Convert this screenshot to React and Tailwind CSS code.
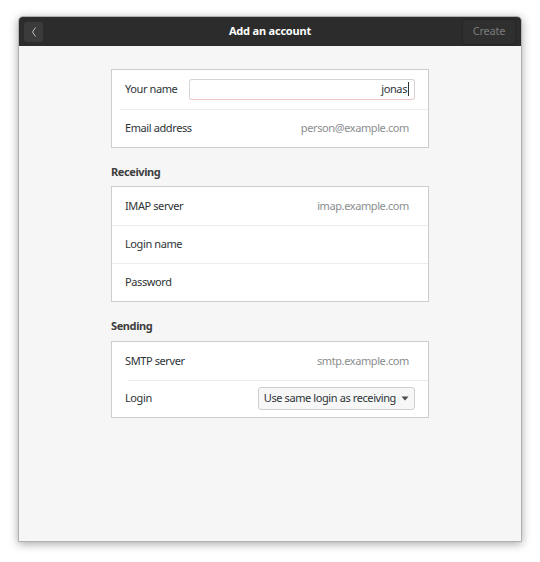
import React from 'react';

const font = { fontFamily: '"Noto Sans", "Open Sans", sans-serif' };

function Row({ label, children, sep = 'inset', h = 'h-[38.5px]' }) {
    return (
        <div className={`relative flex items-center justify-between ${h} pl-[13px] pr-[13px]`}>
            {sep === 'inset' && <div className="absolute top-0 left-[8px] right-0 h-px bg-[#ececec]" />}
            {sep === 'full' && <div className="absolute top-0 left-0 right-0 h-px bg-[#ececec]" />}
            {sep === 'deep' && <div className="absolute top-0 left-[16px] right-0 h-px bg-[#ececec]" />}
            <span className="text-[#2e3436]">{label}</span>
            {children}
        </div>
    );
}

function Hint({ children }) {
    return <span className="text-[#8b8e8f] pr-[6px]">{children}</span>;
}

export default function App() {
    return (
        <div className="w-[540px] h-[562px] bg-white pt-[16px] pl-[18px]" style={font}>
            <div className="w-[504px] h-[526px] bg-[#f6f6f6] border border-[#b0b0b0] rounded-t-[5px] shadow-[0_2px_10px_rgba(0,0,0,0.35)] flex flex-col overflow-hidden">
                {/* header bar */}
                <div className="h-[29px] bg-[#2c2c2c] flex items-center justify-between px-[5px] relative shrink-0">
                    <div className="w-[19px] h-[20px] bg-[#3b3b3b] rounded-[3px] flex items-center justify-center">
                        <svg width="8" height="12" viewBox="0 0 8 12">
                            <path d="M5.5 1.5 L2.5 6 L5.5 10.5" fill="none" stroke="#bdbdbd" strokeWidth="1" />
                        </svg>
                    </div>
                    <div className="absolute inset-0 flex items-center justify-center pointer-events-none">
                        <span className="text-white text-[11px] tracking-[-0.2px] font-bold">Add an account</span>
                    </div>
                    <div className="w-[54px] h-[26px] bg-[#2f2f2f] border border-[#262626] rounded-[3px] flex items-center justify-center">
                        <span className="text-[#7b7b7b] text-[11px] tracking-[-0.2px]">Create</span>
                    </div>
                </div>

                {/* body */}
                <div className="flex-1 pt-[23px] pl-[92px] text-[11px] tracking-[-0.4px]">
                    <div className="w-[318px] flex flex-col">
                        <div className="bg-white border border-[#cdcdcd]">
                            <div className="flex items-center justify-between h-[38.5px] pl-[13px] pr-[13px]">
                                <span className="text-[#2e3436]">Your name</span>
                                <div className="w-[226px] h-[21px] bg-white border border-[#d8d2d2] border-b-[#f0c8c8] rounded-[3px] flex items-center justify-end pr-[5px]">
                                    <span className="text-[#2e3436]">jonas</span>
                                    <span className="w-px h-[14px] bg-[#2e3436] ml-px" />
                                </div>
                            </div>
                            <Row label="Email address">
                                <Hint>person@example.com</Hint>
                            </Row>
                        </div>

                        <div className="font-bold text-[#3d3d3d] mt-[17px] mb-[7px] leading-[14px]">Receiving</div>
                        <div className="bg-white border border-[#cdcdcd]">
                            <Row label="IMAP server" sep="none" h="h-[38px]">
                                <Hint>imap.example.com</Hint>
                            </Row>
                            <Row label="Login name" sep="full" h="h-[38px]" />
                            <Row label="Password" sep="full" h="h-[38px]" />
                        </div>

                        <div className="font-bold text-[#3d3d3d] mt-[17px] mb-[8px] leading-[14px]">Sending</div>
                        <div className="bg-white border border-[#cdcdcd]">
                            <Row label="SMTP server" sep="none" h="h-[38px]">
                                <Hint>smtp.example.com</Hint>
                            </Row>
                            <Row label="Login" sep="deep" h="h-[37px]">
                                <div className="h-[23px] px-[5px] bg-[#f7f7f7] border border-[#cfcfcf] rounded-[3px] flex items-center gap-[5px]">
                                    <span className="text-[#2e3436]">Use same login as receiving</span>
                                    <svg width="8" height="5" viewBox="0 0 8 5">
                                        <path d="M0.5 0.5 L7.5 0.5 L4 4.5 Z" fill="#4a4a4a" />
                                    </svg>
                                </div>
                            </Row>
                        </div>
                    </div>
                </div>
            </div>
        </div>
    );
}
